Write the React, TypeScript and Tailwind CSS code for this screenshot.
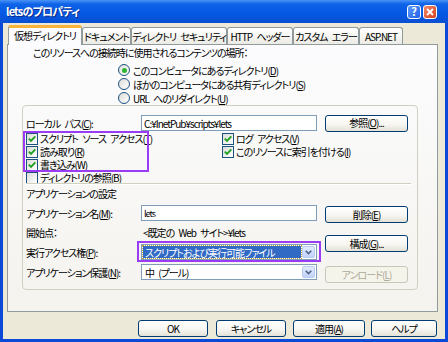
import React from "react";

const font =
  "font-['Noto_Sans_CJK_JP','Noto_Sans_CJK_SC',sans-serif] [font-feature-settings:'palt'] tracking-[-1px] [word-spacing:3px]";

function K({ k }: { k: string }) {
  return (
    <>
      (<span className="underline">{k}</span>)
    </>
  );
}

function XpButton({
  children,
  className = "",
  disabled = false,
}: {
  children: React.ReactNode;
  className?: string;
  disabled?: boolean;
}) {
  return (
    <div
      className={`h-[17px] flex items-center justify-center rounded-[3px] border leading-none whitespace-nowrap ${
        disabled
          ? "border-[#c9c7ba] text-[#aca899] bg-[#f5f4ea]"
          : "border-[#003c74] text-black bg-[linear-gradient(to_bottom,#ffffff_0%,#f7f6f2_55%,#e4e1d6_100%)]"
      } ${className}`}
    >
      {children}
    </div>
  );
}

function Check({ on, children }: { on?: boolean; children: React.ReactNode }) {
  return (
    <div className="flex items-center h-[13px]">
      <span className="w-[12px] h-[12px] shrink-0 border border-[#1c5180] bg-[linear-gradient(135deg,#dcdcd7,#ffffff)] flex items-center justify-center">
        {on && (
          <svg width="8" height="8" viewBox="0 0 8 8">
            <path d="M0.8 3.6 L3 5.9 L7.3 1.3" stroke="#21a121" strokeWidth="1.9" fill="none" />
          </svg>
        )}
      </span>
      <span className="ml-[2px] whitespace-nowrap">{children}</span>
    </div>
  );
}

function Radio({ on, children }: { on?: boolean; children: React.ReactNode }) {
  return (
    <div className="flex items-center h-[14px]">
      <span className="w-[12px] h-[12px] shrink-0 rounded-full border border-[#1c5180] bg-[linear-gradient(135deg,#dcdcd7,#ffffff)] flex items-center justify-center">
        {on && <span className="w-[5px] h-[5px] rounded-full bg-[#2fb52f]" />}
      </span>
      <span className="ml-[3px] whitespace-nowrap">{children}</span>
    </div>
  );
}

function Combo({ value, selected }: { value: string; selected?: boolean }) {
  return (
    <div className="w-[176px] h-[16px] border border-[#7f9db9] bg-white flex items-center p-[1px]">
      <div
        className={`flex-1 h-full flex items-center pl-[2px] mr-[1px] whitespace-nowrap ${
          selected ? "bg-[#316ac5] text-white outline-1 outline-dotted outline-[#c9a13a]" : ""
        }`}
      >
        {value}
      </div>
      <div className="w-[13px] h-full rounded-[2px] border border-[#bacbf0] bg-[linear-gradient(to_bottom,#e3ebfd,#c1d3fb)] flex items-center justify-center">
        <svg width="7" height="5" viewBox="0 0 7 5">
          <path d="M0.7 0.7 L3.5 3.5 L6.3 0.7" stroke="#4d6185" strokeWidth="1.6" fill="none" />
        </svg>
      </div>
    </div>
  );
}

function TextBox({ children }: { children: React.ReactNode }) {
  return (
    <div className="w-[176px] h-[16px] border border-[#7f9db9] bg-white flex items-center px-[2px] whitespace-nowrap overflow-hidden">
      {children}
    </div>
  );
}

const tabs = [
  { label: "仮想ディレクトリ", w: "w-[74px]", active: true },
  { label: "ドキュメント", w: "w-[49px]" },
  { label: "ディレクトリ セキュリティ", w: "w-[96px]" },
  { label: "HTTP ヘッダー", w: "w-[66px]" },
  { label: "カスタム エラー", w: "w-[66px]" },
  { label: "ASP.NET", w: "w-[44px]" },
];

export default function App() {
  return (
    <div className={`relative w-[448px] h-[342px] bg-[#0b4ad6] flex flex-col text-[10px] leading-[13px] text-black ${font}`}>
      {/* title bar */}
      <div className="h-[23px] shrink-0 flex items-center bg-[linear-gradient(to_bottom,#4a93f7_0%,#0e63e8_18%,#0558e3_60%,#0a4fd2_100%)]">
        <span className="pl-[6px] text-[11px] font-bold text-white tracking-[-0.8px] [text-shadow:1px_1px_0_#0a2a8a]">
          letsのプロパティ
        </span>
        <div className="ml-auto mr-[11px] flex gap-[2px]">
          <div className="w-[14px] h-[14px] rounded-[3px] border border-white bg-[linear-gradient(135deg,#5f9bff,#1f5fe6)] flex items-center justify-center text-white text-[11px] font-bold leading-none tracking-normal">
            ?
          </div>
          <div className="w-[14px] h-[14px] rounded-[3px] border border-white bg-[linear-gradient(135deg,#f08a6a,#d6401c)] flex items-center justify-center">
            <svg width="8" height="8" viewBox="0 0 8 8">
              <path d="M1 1 L7 7 M7 1 L1 7" stroke="white" strokeWidth="1.8" />
            </svg>
          </div>
        </div>
      </div>

      {/* body */}
      <div className="flex-1 mx-[3px] mb-[3px] bg-[#ece9d8] flex flex-col pl-[4px] pt-[2px]">
        {/* tabs */}
        <div className="h-[19px] flex items-end pl-[1px] relative z-10">
          {tabs.map((t) =>
            t.active ? (
              <div
                key={t.label}
                className={`${t.w} h-[20px] mb-[-1px] pb-[2px] border border-[#919b9c] border-b-0 border-t-[3px] border-t-[#f8b33a] rounded-t-[3px] bg-[#fcfcfe] flex items-center justify-center whitespace-nowrap`}
              >
                {t.label}
              </div>
            ) : (
              <div
                key={t.label}
                className={`${t.w} h-[17px] border border-[#919b9c] border-b-0 rounded-t-[3px] bg-[linear-gradient(to_bottom,#ffffff,#ecebe5)] flex items-center justify-center whitespace-nowrap`}
              >
                {t.label}
              </div>
            )
          )}
        </div>

        {/* panel */}
        <div className="w-[431px] h-[268px] border border-[#919b9c] bg-[linear-gradient(to_bottom,#fcfcfe,#f4f3ee)] flex flex-col">
          <div className="pl-[25px] h-[14px] flex items-center whitespace-nowrap">
            このリソースへの接続時に使用されるコンテンツの場所：
          </div>
          <div className="mt-[4px] pl-[110px] flex flex-col">
            <Radio on>
              このコンピュータにあるディレクトリ<K k="D" />
            </Radio>
            <Radio>
              ほかのコンピュータにある共有ディレクトリ<K k="S" />
            </Radio>
            <Radio>
              URL へのリダイレクト<K k="U" />
            </Radio>
          </div>

          {/* inner group */}
          <div className="ml-[14px] w-[396px] h-[185px] border border-[#d0d0bf] rounded-[4px] flex flex-col pl-[3px] pt-[9px]">
            <div className="h-[16px] flex items-center">
              <span className="w-[115px] whitespace-nowrap">
                ローカル パス<K k="C" />:
              </span>
              <TextBox>C:¥InetPub¥scripts¥lets</TextBox>
              <XpButton className="ml-[8px] w-[83px] h-[16px]">
                参照<K k="O" />...
              </XpButton>
            </div>

            <div className="mt-[1px] flex">
              <div className="w-[196px] flex flex-col">
                <Check on>
                  スクリプト ソース アクセス<K k="T" />
                </Check>
                <Check on>
                  読み取り<K k="R" />
                </Check>
                <Check on>
                  書き込み<K k="W" />
                </Check>
                <Check>
                  ディレクトリの参照<K k="B" />
                </Check>
              </div>
              <div className="flex flex-col">
                <Check on>
                  ログ アクセス<K k="V" />
                </Check>
                <Check on>
                  このリソースに索引を付ける<K k="I" />
                </Check>
              </div>
            </div>

            <div className="mt-[-1px] mr-[6px] h-[2px] border-t border-[#d0d0bf] border-b border-b-white" />

            <div className="mt-[1px] h-[14px] flex items-center whitespace-nowrap">アプリケーションの設定</div>

            <div className="mt-[5px] flex">
              <div className="w-[291px] flex flex-col">
                <div className="h-[16px] flex items-center">
                  <span className="w-[115px] whitespace-nowrap">
                    アプリケーション名<K k="M" />:
                  </span>
                  <TextBox>
                    <span className="text-[9px]">lets</span>
                  </TextBox>
                </div>
                <div className="mt-[4px] h-[14px] flex items-center">
                  <span className="w-[115px] whitespace-nowrap">開始点：</span>
                  <span className="pl-[2px] whitespace-nowrap">&lt;既定の Web サイト&gt;¥lets</span>
                </div>
                <div className="mt-[5px] h-[16px] flex items-center">
                  <span className="w-[115px] whitespace-nowrap">
                    実行アクセス権<K k="P" />:
                  </span>
                  <Combo value="スクリプトおよび実行可能ファイル" selected />
                </div>
                <div className="mt-[4px] h-[16px] flex items-center">
                  <span className="w-[115px] whitespace-nowrap">
                    アプリケーション保護<K k="N" />:
                  </span>
                  <Combo value="中 (プール)" />
                </div>
              </div>
              <div className="ml-[8px] flex flex-col">
                <XpButton className="mt-[1px] w-[83px] h-[16px]">
                  削除<K k="E" />
                </XpButton>
                <XpButton className="mt-[12px] w-[83px] h-[16px]">
                  構成<K k="G" />...
                </XpButton>
                <XpButton disabled className="mt-[14px] w-[83px] h-[16px]">
                  アンロード<K k="L" />
                </XpButton>
              </div>
            </div>
          </div>
        </div>

        {/* dialog buttons */}
        <div className="mt-[8px] flex justify-end pr-[8px]">
          <XpButton className="w-[70px]">OK</XpButton>
          <XpButton className="ml-[8px] w-[70px]">キャンセル</XpButton>
          <XpButton className="ml-[7px] w-[72px]">
            適用<K k="A" />
          </XpButton>
          <XpButton className="ml-[6px] w-[66px]">ヘルプ</XpButton>
        </div>
      </div>

      {/* purple annotation boxes */}
      <div className="absolute left-[23px] top-[131px] w-[126px] h-[41px] border-2 border-[#9a3cf5] pointer-events-none" />
      <div className="absolute left-[137px] top-[241px] w-[184px] h-[21px] border-2 border-[#9a3cf5] pointer-events-none" />
    </div>
  );
}
